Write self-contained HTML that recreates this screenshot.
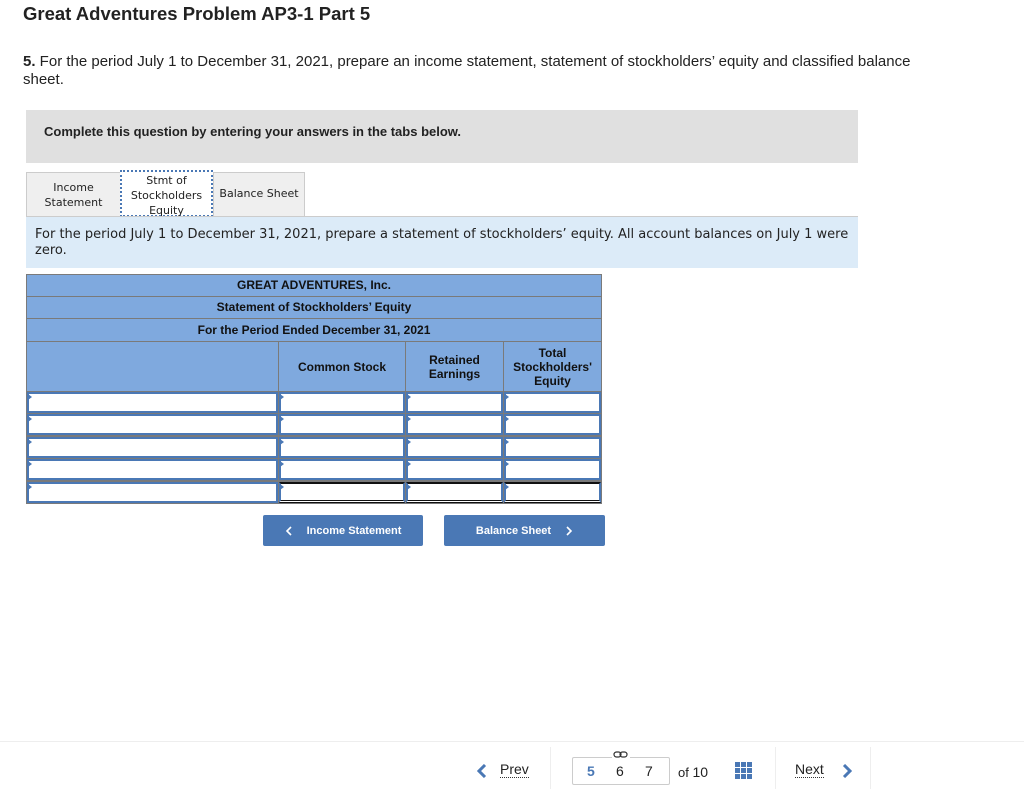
<!DOCTYPE html>
<html><head><meta charset="utf-8"><style>
*{margin:0;padding:0;box-sizing:border-box}
body{width:1024px;height:799px;background:#fff;font-family:"Liberation Sans",sans-serif;color:#222;position:relative;overflow:hidden}
.a{position:absolute}
.t{font-family:"DejaVu Sans","Liberation Sans",sans-serif;}
.hd{position:absolute;left:26px;width:576px;background:#7fa9de;border:1px solid #7a7a7a;font-weight:bold;font-size:12px;text-align:center;color:#111}
.c{position:absolute;background:#7fa9de;border:1px solid #7a7a7a;font-weight:bold;font-size:12px;text-align:center;display:flex;align-items:center;justify-content:center;color:#111;line-height:14px}
.in{position:absolute;background:#fff;border:2px solid #4a78b5;}
.in:before{content:"";position:absolute;left:-1px;top:0;border-left:4px solid #4a78b5;border-top:3px solid transparent;border-bottom:3px solid transparent}
.btn{position:absolute;background:#4a78b5;color:#fff;font-weight:bold;font-size:11px;border-radius:2px;display:flex;align-items:center;justify-content:center}
</style></head><body>
<div class="a" style="left:23px;top:3px;font-size:18.5px;font-weight:bold">Great Adventures Problem AP3-1 Part 5</div>
<div class="a" style="left:23px;top:53px;font-size:15px;width:920px;line-height:18px"><b>5.</b> For the period July 1 to December 31, 2021, prepare an income statement, statement of stockholders’ equity and classified balance sheet.</div>
<div class="a" style="left:26px;top:110px;width:832px;height:53px;background:#e0e0e0"></div>
<div class="a" style="left:44px;top:124px;font-size:13px;font-weight:bold">Complete this question by entering your answers in the tabs below.</div>
<div class="a t" style="left:26px;top:172px;width:95px;height:44px;background:#efefef;border:1px solid #ccc;border-bottom:none;font-size:11px;text-align:center;padding-top:7px;line-height:15px">Income<br>Statement</div>
<div class="a t" style="left:120px;top:170px;width:93px;height:47px;background:#fff;border:2px dotted #4a78b5;font-size:11px;text-align:center;padding-top:1px;line-height:15px">Stmt of<br>Stockholders<br>Equity</div>
<div class="a t" style="left:213px;top:172px;width:92px;height:44px;background:#efefef;border:1px solid #ccc;border-bottom:none;font-size:11px;text-align:center;padding-top:14px">Balance Sheet</div>
<div class="a" style="left:26px;top:216px;width:832px;height:52px;background:#dcebf8;border-top:1px solid #ccc"></div>
<div class="a t" style="left:35px;top:227px;width:815px;font-size:13px;line-height:16px">For the period July 1 to December 31, 2021, prepare a statement of stockholders’ equity. All account balances on July 1 were zero.</div>
<div class="hd" style="top:274px;height:23px;line-height:21px">GREAT ADVENTURES, Inc.</div>
<div class="hd" style="top:296px;height:23px;line-height:21px">Statement of Stockholders’ Equity</div>
<div class="hd" style="top:318px;height:24px;line-height:22px">For the Period Ended December 31, 2021</div>
<div class="c" style="left:26px;top:341px;width:253px;height:51px"></div>
<div class="c" style="left:278px;top:341px;width:128px;height:51px">Common Stock</div>
<div class="c" style="left:405px;top:341px;width:99px;height:51px">Retained<br>Earnings</div>
<div class="c" style="left:503px;top:341px;width:99px;height:51px">Total<br>Stockholders'<br>Equity</div>
<div class="a" style="left:26px;top:391px;width:576px;height:113px;background:#7a7a7a"></div>
<div id="rows"></div>
<script>
var ys=[391,413,436,458,481],xs=[[26,252],[278,127],[405,98],[503,98]],h='';
ys.forEach(function(y,i){xs.forEach(function(x,j){h+='<div class="in" style="left:'+(x[0]+1)+'px;top:'+(y+1)+'px;width:'+(x[1]-1)+'px;height:21px'+(i==4&&j>0?';border-top:2px solid #111;border-bottom:3px double #111':'')+'"></div>';});});
document.getElementById('rows').innerHTML=h;
</script>
<div class="btn" style="left:263px;top:515px;width:160px;height:31px"><svg width="8" height="10" style="margin-right:14px"><path d="M6 1L2 5L6 9" stroke="#fff" stroke-width="1.6" fill="none"/></svg>Income Statement</div>
<div class="btn" style="left:444px;top:515px;width:161px;height:31px">Balance Sheet<svg width="8" height="10" style="margin-left:14px"><path d="M2 1L6 5L2 9" stroke="#fff" stroke-width="1.6" fill="none"/></svg></div>
<div class="a" style="left:0;top:741px;width:1024px;height:1px;background:#eee"></div>
<div class="a" style="left:550px;top:747px;width:1px;height:42px;background:#eee"></div>
<div class="a" style="left:775px;top:747px;width:1px;height:42px;background:#eee"></div>
<div class="a" style="left:870px;top:747px;width:1px;height:42px;background:#eee"></div>
<svg class="a" style="left:477px;top:764px" width="10" height="14"><path d="M8 1L2 7L8 13" stroke="#4a78b5" stroke-width="3" fill="none"/></svg>
<div class="a" style="left:500px;top:762px;font-size:14px;border-bottom:1px dotted #333;line-height:15px">Prev</div>
<div class="a" style="left:572px;top:757px;width:98px;height:28px;border:1px solid #ccc;border-radius:2px"></div>
<svg class="a" style="left:612px;top:750px;background:#fff" width="18" height="10"><rect x="2" y="2" width="7" height="5" rx="2.5" stroke="#333" fill="none" stroke-width="1.2"/><rect x="8" y="2" width="7" height="5" rx="2.5" stroke="#333" fill="none" stroke-width="1.2"/></svg>
<div class="a" style="left:587px;top:763px;font-size:14px;font-weight:bold;color:#4a78b5">5</div>
<div class="a" style="left:616px;top:763px;font-size:14px">6</div>
<div class="a" style="left:645px;top:763px;font-size:14px">7</div>
<div class="a" style="left:678px;top:764px;font-size:13px">of <span style="font-size:14px">10</span></div>
<svg class="a" style="left:735px;top:762px" width="18" height="17"><g fill="#4a78b5"><rect x="0" y="0" width="5" height="5"/><rect x="6" y="0" width="5" height="5"/><rect x="12" y="0" width="5" height="5"/><rect x="0" y="6" width="5" height="5"/><rect x="6" y="6" width="5" height="5"/><rect x="12" y="6" width="5" height="5"/><rect x="0" y="12" width="5" height="5"/><rect x="6" y="12" width="5" height="5"/><rect x="12" y="12" width="5" height="5"/></g></svg>
<div class="a" style="left:795px;top:762px;font-size:14px;border-bottom:1px dotted #333;line-height:15px">Next</div>
<svg class="a" style="left:842px;top:764px" width="10" height="14"><path d="M2 1L8 7L2 13" stroke="#4a78b5" stroke-width="3" fill="none"/></svg>
</body></html>
